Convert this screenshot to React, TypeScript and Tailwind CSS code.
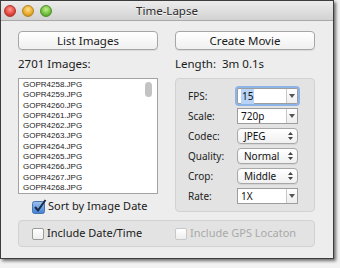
import React from 'react';

const files = Array.from({ length: 11 }, (_, i) => `GOPR${4258 + i}.JPG`);

const settings = [
  { label: 'FPS:', kind: 'combo', value: '15', focused: true },
  { label: 'Scale:', kind: 'combo', value: '720p' },
  { label: 'Codec:', kind: 'popup', value: 'JPEG' },
  { label: 'Quality:', kind: 'popup', value: 'Normal' },
  { label: 'Crop:', kind: 'popup', value: 'Middle' },
  { label: 'Rate:', kind: 'combo', value: '1X' },
];

function DownArrow() {
  return (
    <svg width="6" height="4" viewBox="0 0 6 4">
      <path d="M0 0 L6 0 L3 4 Z" fill="#555" />
    </svg>
  );
}

function UpDownArrows() {
  return (
    <svg width="5" height="8" viewBox="0 0 5 8">
      <path d="M0 3 L5 3 L2.5 0 Z" fill="#444" />
      <path d="M0 5 L5 5 L2.5 8 Z" fill="#444" />
    </svg>
  );
}

function Combo({ value, focused }: { value: string; focused?: boolean }) {
  return (
    <div
      className={`w-[61px] h-[16px] flex bg-white border border-[#9d9d9d] ${
        focused ? 'ring-2 ring-[#8db4e6] rounded-[2px]' : ''
      }`}
    >
      <div className="flex-1 flex items-center pl-[3px] text-[10px] text-[#111]">
        <span className={focused ? 'bg-[#b7d4f8] px-[1px]' : ''}>{value}</span>
      </div>
      <div className="w-[11px] border-l border-[#c8c8c8] flex items-center justify-center bg-gradient-to-b from-white to-[#ededed]">
        <DownArrow />
      </div>
    </div>
  );
}

function Popup({ value }: { value: string }) {
  return (
    <div className="w-[61px] h-[16px] flex items-center justify-between pl-[6px] pr-[4px] rounded-[4px] border border-[#a8a8a8] bg-gradient-to-b from-white to-[#f0f0f0] shadow-[0_1px_0_rgba(0,0,0,0.06)] text-[10px] text-[#111]">
      <span>{value}</span>
      <UpDownArrows />
    </div>
  );
}

function Checkbox({ checked, disabled }: { checked?: boolean; disabled?: boolean }) {
  if (checked) {
    return (
      <svg width="15" height="15" viewBox="0 0 15 15" className="shrink-0">
        <defs>
          <linearGradient id="cb" x1="0" y1="0" x2="0" y2="1">
            <stop offset="0" stopColor="#9cc3f0" />
            <stop offset="1" stopColor="#3f7fd6" />
          </linearGradient>
        </defs>
        <rect x="0.5" y="2.5" width="12" height="12" rx="2" fill="url(#cb)" stroke="#4a74b0" />
        <path d="M3 8 L6 11.5 L13.5 1" fill="none" stroke="#1b2a44" strokeWidth="2" />
      </svg>
    );
  }
  return (
    <div
      className={`w-[12px] h-[12px] shrink-0 rounded-[2px] border bg-gradient-to-b from-white to-[#eeeeee] ${
        disabled ? 'border-[#c8c8c8]' : 'border-[#9a9a9a]'
      }`}
    />
  );
}

function PushButton({ children }: { children: React.ReactNode }) {
  return (
    <button className="w-full h-[19px] rounded-[4px] border border-[#a6a6a6] bg-gradient-to-b from-white to-[#f0f0f0] shadow-[0_1px_0_rgba(0,0,0,0.08)] text-[11.5px] text-[#1a1a1a] leading-none">
      {children}
    </button>
  );
}

export default function App() {
  return (
    <div className="w-[340px] h-[268px] bg-[#f2f2f2] font-['Noto_Sans',sans-serif]">
      <div className="w-[334px] h-[259px] flex flex-col border border-[#3c3c3c] bg-[#ededed] shadow-[2px_2px_3px_rgba(0,0,0,0.55)]">
        {/* Title bar */}
        <div className="h-[20px] shrink-0 grid grid-cols-[1fr_auto_1fr] items-center bg-gradient-to-b from-[#ececec] to-[#d2d2d2] border-b border-[#a9a9a9]">
          <div className="flex items-center gap-[6px] pl-[3px]">
            <span className="w-[12px] h-[12px] rounded-full bg-[radial-gradient(circle_at_50%_35%,#ff9a92,#e0443a_60%,#a52a22)] border border-[#b0362e]" />
            <span className="w-[12px] h-[12px] rounded-full bg-[radial-gradient(circle_at_50%_35%,#ffe08a,#e6a82a_60%,#b07a18)] border border-[#b88520]" />
            <span className="w-[12px] h-[12px] rounded-full bg-[radial-gradient(circle_at_50%_35%,#c4f08c,#6cbc3a_60%,#3f8a22)] border border-[#4f8f2c]" />
          </div>
          <div className="text-[11.5px] text-[#2a2a2a] [text-shadow:0_1px_0_rgba(255,255,255,0.7)]">Time-Lapse</div>
          <div />
        </div>

        {/* Body */}
        <div className="flex-1 px-[17px] pt-[10px]">
          <div className="flex gap-[17px]">
            {/* Left column */}
            <div className="w-[140px] flex flex-col">
              <PushButton>List Images</PushButton>
              <div className="h-[28px] flex items-center text-[11.5px] text-[#1a1a1a]">2701 Images:</div>
              <div className="h-[116px] flex bg-white border border-[#a3a3a3]">
                <div className="flex-1 pl-[4px] pt-[1px] font-['Liberation_Sans',sans-serif] text-[8px] leading-[10.3px] text-[#222]">
                  {files.map((f) => (
                    <div key={f}>{f}</div>
                  ))}
                </div>
                <div className="w-[12px] pr-[4px] pt-[3px]">
                  <div className="w-[7px] h-[15px] rounded-full bg-[#c3c3c3]" />
                </div>
              </div>
              <div className="mt-[4px] h-[16px] flex items-center gap-[1px] pl-[14px] text-[11px] text-[#1a1a1a]">
                <Checkbox checked />
                <span>Sort by Image Date</span>
              </div>
            </div>

            {/* Right column */}
            <div className="w-[140px] flex flex-col">
              <PushButton>Create Movie</PushButton>
              <div className="h-[28px] flex items-center text-[11.5px] text-[#1a1a1a] whitespace-pre">Length:  3m 0.1s</div>
              <div className="h-[134px] flex flex-col gap-[4px] pt-[9px] pl-[12px] rounded-[4px] bg-[#e3e3e3] border border-[#d2d2d2]">
                {settings.map((s) => (
                  <div key={s.label} className="flex items-center h-[16px]">
                    <div className="w-[49px] text-[10px] text-[#222]">{s.label}</div>
                    {s.kind === 'combo' ? <Combo value={s.value} focused={s.focused} /> : <Popup value={s.value} />}
                  </div>
                ))}
              </div>
            </div>
          </div>

          {/* Bottom options */}
          <div className="mt-[6px] h-[27px] w-[297px] flex items-center rounded-[4px] bg-[#e3e3e3] border border-[#d2d2d2] text-[11px]">
            <div className="w-[156px] pl-[13px] flex items-center gap-[3px] text-[#1a1a1a]">
              <Checkbox />
              <span>Include Date/Time</span>
            </div>
            <div className="flex items-center gap-[3px] text-[#a9a9a9]">
              <Checkbox disabled />
              <span>Include GPS Locaton</span>
            </div>
          </div>
        </div>
      </div>
    </div>
  );
}
